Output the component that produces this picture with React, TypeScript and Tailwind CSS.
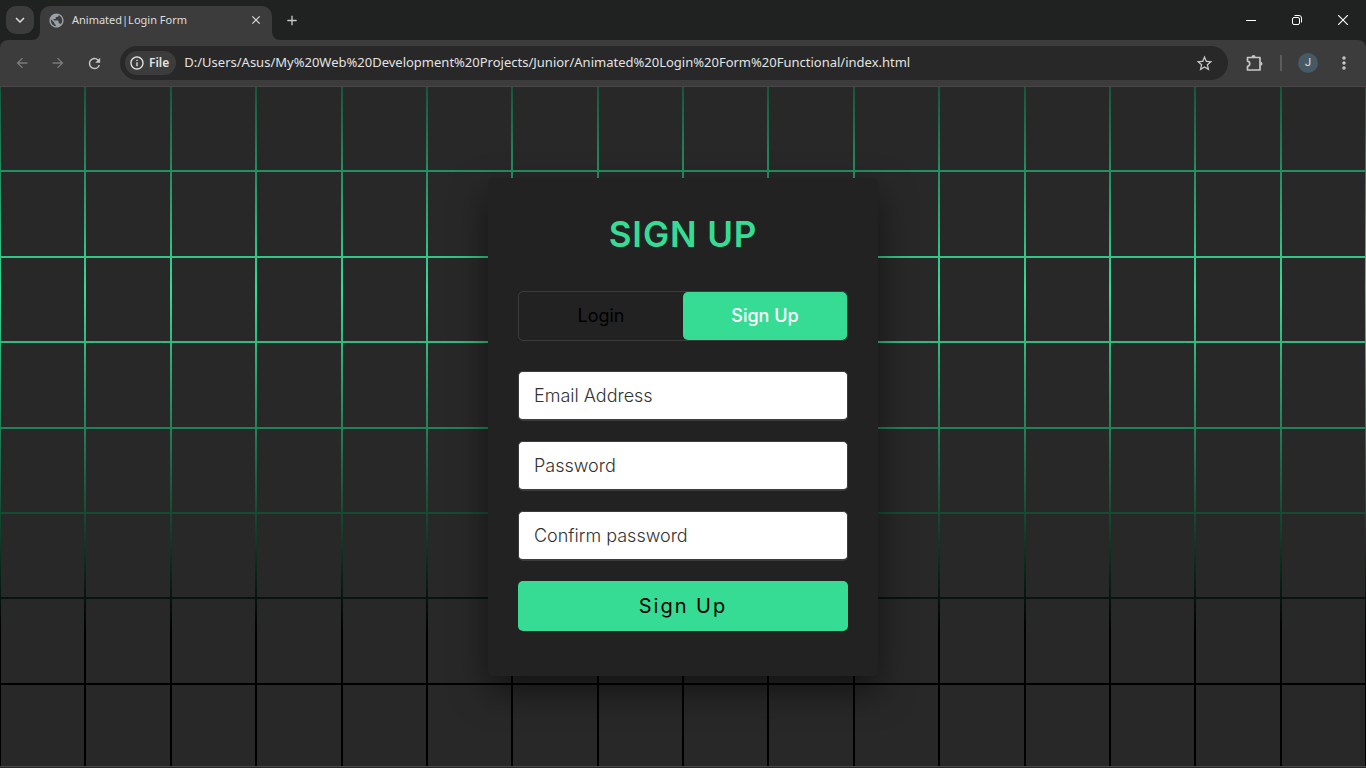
import {
  MdAdd,
  MdArrowBack,
  MdArrowForward,
  MdClose,
  MdInfoOutline,
  MdKeyboardArrowDown,
  MdMoreVert,
  MdPublic,
  MdRefresh,
  MdStarBorder,
} from "react-icons/md";

const cells = Array.from({ length: 256 }, (_, i) => i);

const fields = [
  { id: "email", label: "Email Address", type: "email" },
  { id: "password", label: "Password", type: "password" },
  { id: "confirm", label: "Confirm password", type: "password" },
];

function TabStrip() {
  return (
    <div className="flex h-10 items-center bg-[#202121] pl-1.5 text-[#dedede]">
      <button
        aria-label="Search tabs"
        className="flex size-7 shrink-0 items-center justify-center rounded-[10px] bg-[#3c3c3c]"
      >
        <MdKeyboardArrowDown size={18} />
      </button>
      <div className="relative ml-1.5 flex h-[34px] w-58 items-center self-end rounded-t-[10px] bg-[#3c3c3c] pr-2 pb-1.5 pl-2">
        <svg className="absolute bottom-0 -left-2 size-2" viewBox="0 0 8 8" aria-hidden="true">
          <path d="M8 0v8H0a8 8 0 0 0 8-8z" fill="#3c3c3c" />
        </svg>
        <svg className="absolute -right-2 bottom-0 size-2" viewBox="0 0 8 8" aria-hidden="true">
          <path d="M0 0v8h8a8 8 0 0 1-8-8z" fill="#3c3c3c" />
        </svg>
        <MdPublic size={17} color="#9aa0a6" />
        <span className="ml-[7px] flex-1 whitespace-nowrap text-[11px]">Animated|Login Form</span>
        <button aria-label="Close tab" className="flex size-4 items-center justify-center">
          <MdClose size={14} />
        </button>
      </div>
      <button aria-label="New tab" className="ml-3 flex size-4 items-center justify-center text-[#c7c7c7]">
        <MdAdd size={17} />
      </button>
      <div className="ml-auto flex text-white">
        <button aria-label="Minimize" className="flex h-10 w-[46px] items-center justify-center">
          <svg width="10" height="10" viewBox="0 0 10 10" fill="none" stroke="currentColor">
            <path d="M0 5.5h10" />
          </svg>
        </button>
        <button aria-label="Restore" className="flex h-10 w-[46px] items-center justify-center">
          <svg width="10" height="10" viewBox="0 0 10 10" fill="none" stroke="currentColor">
            <rect x=".5" y="2.5" width="7" height="7" rx="1.5" />
            <path d="M2.5.5H7A2.5 2.5 0 0 1 9.500 3v4.500" />
          </svg>
        </button>
        <button aria-label="Close" className="flex h-10 w-[46px] items-center justify-center">
          <svg width="10" height="10" viewBox="0 0 10 10" fill="none" stroke="currentColor" strokeWidth="1.1">
            <path d="M0 0l10 10M10 0L0 10" />
          </svg>
        </button>
      </div>
    </div>
  );
}

function Toolbar() {
  return (
    <div className="bg-[#202121]">
      <div className="flex h-[47px] items-center rounded-t-lg border-b border-[#484848] bg-[#3c3c3c] pr-3 pl-3.5 text-[#c7c7c7]">
        <div className="flex items-center gap-5">
          <button aria-label="Back" className="text-[#7b7b7b]">
            <MdArrowBack size={16} />
          </button>
          <button aria-label="Forward" className="text-[#7b7b7b]">
            <MdArrowForward size={16} />
          </button>
          <button aria-label="Reload">
            <MdRefresh size={17} />
          </button>
        </div>
        <div className="ml-[17px] flex h-[34px] flex-1 items-center rounded-full bg-[#282828] pr-3.5 pl-[5px]">
          <button className="flex h-6 items-center gap-1 rounded-full bg-[#3c3c3c] pr-[7px] pl-1 text-[#e3e3e3]">
            <MdInfoOutline size={16} />
            <span className="text-xs font-semibold">File</span>
          </button>
          <input
            aria-label="Address"
            className="ml-2 min-w-0 flex-1 bg-transparent text-[13px] text-[#e3e3e3] outline-none"
            defaultValue="D:/Users/Asus/My%20Web%20Development%20Projects/Junior/Animated%20Login%20Form%20Functional/index.html"
          />
          <button aria-label="Bookmark this page">
            <MdStarBorder size={19} />
          </button>
        </div>
        <button aria-label="Extensions" className="ml-[18px]">
          <svg width="17" height="18" viewBox="0 0 17 18" fill="none" aria-hidden="true">
            <path
              d="M1.500 3.500h12.500v12.500H1.500v-3.600c3-.5 3-4.800 0-5.300z"
              stroke="currentColor"
              strokeWidth="1.700"
              strokeLinejoin="round"
            />
            <path d="M5.500 3a2 2 0 0 1 4 0zM14.500 7.700a2 2 0 0 1 0 4z" fill="currentColor" />
          </svg>
        </button>
        <span className="ml-[17px] h-4 w-0.5 bg-[#5c5c5c]" />
        <button
          aria-label="Profile"
          className="ml-4 flex size-5 items-center justify-center rounded-full bg-[#455a64] font-[Roboto] text-[11px] text-[#e3e3e3]"
        >
          J
        </button>
        <button aria-label="Menu" className="ml-4">
          <MdMoreVert size={20} />
        </button>
      </div>
    </div>
  );
}

function SignUpCard() {
  return (
    <form
      className="z-10 col-start-1 row-start-1 w-[390px] place-self-center rounded-[5px] bg-[#222222] px-[30px] pt-[30px] pb-[45px] font-[Inter,sans-serif] shadow-[0_15px_35px_rgba(0,0,0,0.5)]"
      onSubmit={(e) => e.preventDefault()}
    >
      <h1 className="text-center text-[35px] leading-[53px] font-semibold tracking-wide text-[#37dc94]">SIGN UP</h1>
      <div className="mt-[30px] flex h-[50px] rounded-[5px] border border-[#3c3c3c] text-lg">
        <button type="button" className="flex-1 rounded-[5px] text-black">
          Login
        </button>
        <button type="button" className="flex-1 rounded-[5px] bg-[#37dc94] font-medium text-white">
          Sign Up
        </button>
      </div>
      <div className="mt-[30px] flex flex-col gap-5">
        {fields.map((f) => (
          <input
            key={f.id}
            id={f.id}
            type={f.type}
            aria-label={f.label}
            placeholder={f.label}
            className="h-[50px] w-full rounded-[5px] border border-b-2 border-[#3c3c3c] bg-white px-[15px] text-lg font-light text-[#222222] outline-none placeholder:text-[#333333]"
          />
        ))}
        <button type="submit" className="h-[50px] rounded-[5px] bg-[#37dc94] text-xl tracking-widest text-black">
          Sign Up
        </button>
      </div>
    </form>
  );
}

export default function App() {
  return (
    <div className="flex min-h-screen flex-col bg-[#282828] pb-px font-['Noto_Sans',sans-serif]">
      <TabStrip />
      <Toolbar />
      <main className="grid flex-1 border-b border-[#484848] bg-[linear-gradient(#000_-20%,#37dc94_30%,#000_80%)]">
        <div
          aria-hidden="true"
          className="col-start-1 row-start-1 grid h-0 min-h-full grid-cols-16 content-start gap-0.5 overflow-hidden px-px"
        >
          {cells.map((i) => (
            <span key={i} className="aspect-square bg-[#282828]" />
          ))}
        </div>
        <SignUpCard />
      </main>
    </div>
  );
}
